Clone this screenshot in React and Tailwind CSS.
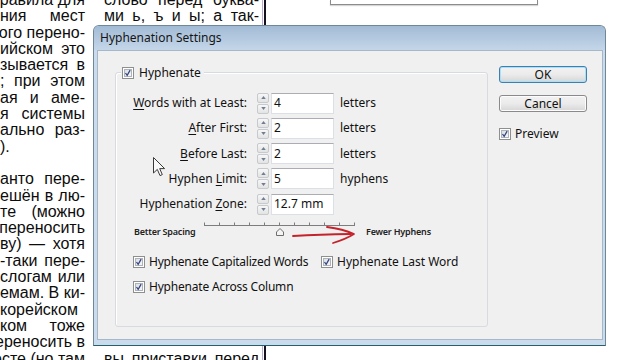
import React from "react";

const leftLines = [
  "правила для",
  "ния мест",
  "ого перено-",
  "ийском это",
  "зывается в",
  "; при этом",
  "ая и аме-",
  "я системы",
  "ально раз-",
  ").",
  "",
  "анто пере-",
  "ешён в лю-",
  "те (можно",
  "переносить",
  "ву) — хотя",
  "-таки пере-",
  "слогам или",
  "емам. В ки-",
  "корейском",
  "ком тоже",
  "ереносить в",
  "есте (но там",
];

// a justified line whose start may run off the left edge, as in the cut-off column
function Line({ text, last }) {
  return (
    <div className={"h-[16.3px] flex " + (last ? "justify-start" : "justify-end")}>
      <span className={"shrink-0 whitespace-nowrap " + (last ? "" : "min-w-full text-justify [text-align-last:justify]")}>
        {text || "\u00a0"}
      </span>
    </div>
  );
}

function Check({ className = "" }) {
  return (
    <span className={"relative inline-block shrink-0 w-[12px] h-[12px] border border-[#8e8f8f] bg-white " + className}>
      <span className="absolute inset-[1px] border border-[#aeb3b9] bg-gradient-to-br from-[#dbdfe4] to-[#f6f7f8]" />
      <svg viewBox="0 0 12 12" className="absolute inset-0 w-full h-full">
        <path d="M3 6 L5 8.8 L8.6 2.6" stroke="#33437e" strokeWidth="1.5" fill="none" />
      </svg>
    </span>
  );
}

function Spin() {
  return (
    <div className="flex flex-col w-[12px] h-[21px] gap-[1px]">
      {[0, 1].map((i) => (
        <div key={i} className="flex-1 flex items-center justify-center border border-[#c6c9cd] rounded-[2px] bg-gradient-to-b from-[#f7f7f7] to-[#e3e3e3]">
          <svg viewBox="0 0 6 4" className="w-[5px] h-[3px]">
            <path d={i === 0 ? "M0 4 L3 0 L6 4 Z" : "M0 0 L3 4 L6 0 Z"} fill="#6f7e91" />
          </svg>
        </div>
      ))}
    </div>
  );
}

function Row({ label, unit, value }) {
  return (
    <div className="flex items-center h-[21px]">
      <div className="w-[131px] text-right">{label}</div>
      <div className="ml-[10px]">
        <Spin />
      </div>
      <div className="ml-[2px] w-[63px] h-[21px] bg-white border border-[#dbdfe6] border-t-[#abadb3] flex items-center pl-[2px]">
        {value}
      </div>
      {unit && <span className="ml-[6px]">{unit}</span>}
    </div>
  );
}

function Btn({ children, primary }) {
  return (
    <div
      className={
        "w-[88px] h-[17px] rounded-[3px] flex items-center justify-center bg-gradient-to-b from-[#f2f2f2] via-[#ebebeb] to-[#d6d6d6] " +
        (primary ? "border border-[#3c7fb1] shadow-[inset_0_0_0_1px_#a8e0f7]" : "border border-[#8a8a8a] shadow-[inset_0_0_0_1px_#fcfcfc]")
      }
    >
      {children}
    </div>
  );
}

export default function App() {
  return (
    <div className="relative w-[640px] h-[360px] overflow-hidden bg-white">
      {/* page behind the dialog */}
      <div className="flex h-full font-['Liberation_Sans',Arial,sans-serif] text-[16px] text-[#0c0c0c] leading-[16.3px]">
        <div className="w-[85px] shrink-0 -mt-[8px]">
          {leftLines.map((t, i) => (
            <Line key={i} text={t} last={i === 9} />
          ))}
        </div>
        <div className="ml-[19px] w-[155px] shrink-0 -mt-[8px]">
          <Line text="слово перед буква-" />
          <Line text="ми ь, ъ и ы; а так-" />
          <div className="h-[326px]" />
          <Line text="вы приставки перед" />
        </div>
        <div className="ml-[3px] w-[1px] h-full bg-[#b9a9d6]" />
        <div className="ml-[1px] w-[2px] h-full bg-[#15121f]" />
        <div className="ml-[64px] w-[208px] h-[5px] border-x border-b border-[#8c8c8c] shadow-[0_1px_1px_#d6d6d6]" />
      </div>

      {/* dialog */}
      <div className="absolute left-[93px] top-[25px] w-[513px] h-[321px] flex flex-col rounded-t-[6px] border border-[#6f8796] border-b-[#25606b] bg-[#c9dbec] font-['Noto_Sans',sans-serif] text-[12px] text-[#111]">
        <div className="h-[24px] flex items-center pl-[6px] rounded-t-[5px] bg-gradient-to-b from-[#a2bbd5] to-[#c4d6e9] text-[12px] text-[#151515]">
          Hyphenation Settings
        </div>
        <div className="flex-1 ml-[3px] mr-[2px] mb-[5px] bg-[#f0f0f0] border border-[#a6b8c8] flex">
          {/* group box */}
          <div className="relative ml-[17px] mt-[21px] w-[373px] h-[255px] rounded-[3px] border border-[#d5dbe0] shadow-[inset_1px_1px_0_#fff]">
            <div className="absolute -top-[7px] left-[5px] flex items-center gap-[5px] bg-[#f0f0f0] pl-[1px] pr-[3px] h-[14px]">
              <Check />
              <span>Hyphenate</span>
            </div>
            <div className="flex flex-col gap-[4.25px] pt-[19.5px]">
              <Row label={<><u className="underline-offset-2">W</u>ords with at Least:</>} value="4" unit="letters" />
              <Row label={<><u className="underline-offset-2">A</u>fter First:</>} value="2" unit="letters" />
              <Row label={<><u className="underline-offset-2">B</u>efore Last:</>} value="2" unit="letters" />
              <Row label={<>Hyphen <u className="underline-offset-2">L</u>imit:</>} value="5" unit="hyphens" />
              <Row label={<>Hyphenation <u className="underline-offset-2">Z</u>one:</>} value="12.7 mm" />
            </div>
            <div className="flex items-start mt-[6px] ml-[18px] h-[18px]">
              <span className="w-[70px] pt-[4px] text-[9px] font-semibold tracking-[-0.2px] text-[#222]">Better Spacing</span>
              <svg width="152" height="16" viewBox="0 0 152 16" className="shrink-0">
                <line x1="0" y1="4.5" x2="151" y2="4.5" stroke="#7d7d7d" strokeWidth="1" />
                {Array.from({ length: 11 }, (_, i) => (
                  <line key={i} x1={0.5 + i * 15} y1="1.5" x2={0.5 + i * 15} y2="5" stroke="#7d7d7d" strokeWidth="1" />
                ))}
                <path d="M72.5 14.5 L72.5 11 L76 7.5 L79.5 11 L79.5 14.5 Z" fill="#f4f4f4" stroke="#6e6e6e" strokeWidth="1" />
              </svg>
              <span className="ml-[10px] pt-[4px] text-[9px] font-semibold tracking-[-0.2px] text-[#222]">Fewer Hyphens</span>
            </div>
            <div className="flex flex-col gap-[11px] mt-[16px] ml-[17px]">
              <div className="flex items-center h-[14px]">
                <Check />
                <span className="ml-[4px] w-[172px] tracking-[-0.25px]">Hyphenate Capitalized Words</span>
                <Check />
                <span className="ml-[4px]">Hyphenate Last Word</span>
              </div>
              <div className="flex items-center h-[14px]">
                <Check />
                <span className="ml-[4px] tracking-[-0.2px]">Hyphenate Across Column</span>
              </div>
            </div>
          </div>
          {/* buttons */}
          <div className="ml-[11px] mt-[15px] flex flex-col">
            <Btn primary>OK</Btn>
            <div className="mt-[12px]">
              <Btn>Cancel</Btn>
            </div>
            <div className="mt-[15px] flex items-center h-[14px]">
              <Check />
              <span className="ml-[4px]">Preview</span>
            </div>
          </div>
        </div>
      </div>

      {/* annotation arrow */}
      <svg className="absolute left-0 top-0 pointer-events-none" width="640" height="360">
        <path d="M293 236 Q320 234.5 351 234" stroke="#c4232c" strokeWidth="1.8" fill="none" strokeLinecap="round" />
        <path d="M327 227 Q343 229 354 234 Q346 239 333 243" stroke="#c4232c" strokeWidth="1.8" fill="none" strokeLinecap="round" strokeLinejoin="round" />
      </svg>

      {/* mouse pointer */}
      <svg className="absolute left-[153px] top-[157px]" width="13" height="21" viewBox="0 0 13 21">
        <path d="M0.5 0.5 L0.5 16 L4.3 12.4 L7 18.6 L9.3 17.6 L6.7 11.6 L11.6 11.6 Z" fill="#fafafa" stroke="#3a3a3a" strokeWidth="1" strokeLinejoin="round" />
      </svg>
    </div>
  );
}
